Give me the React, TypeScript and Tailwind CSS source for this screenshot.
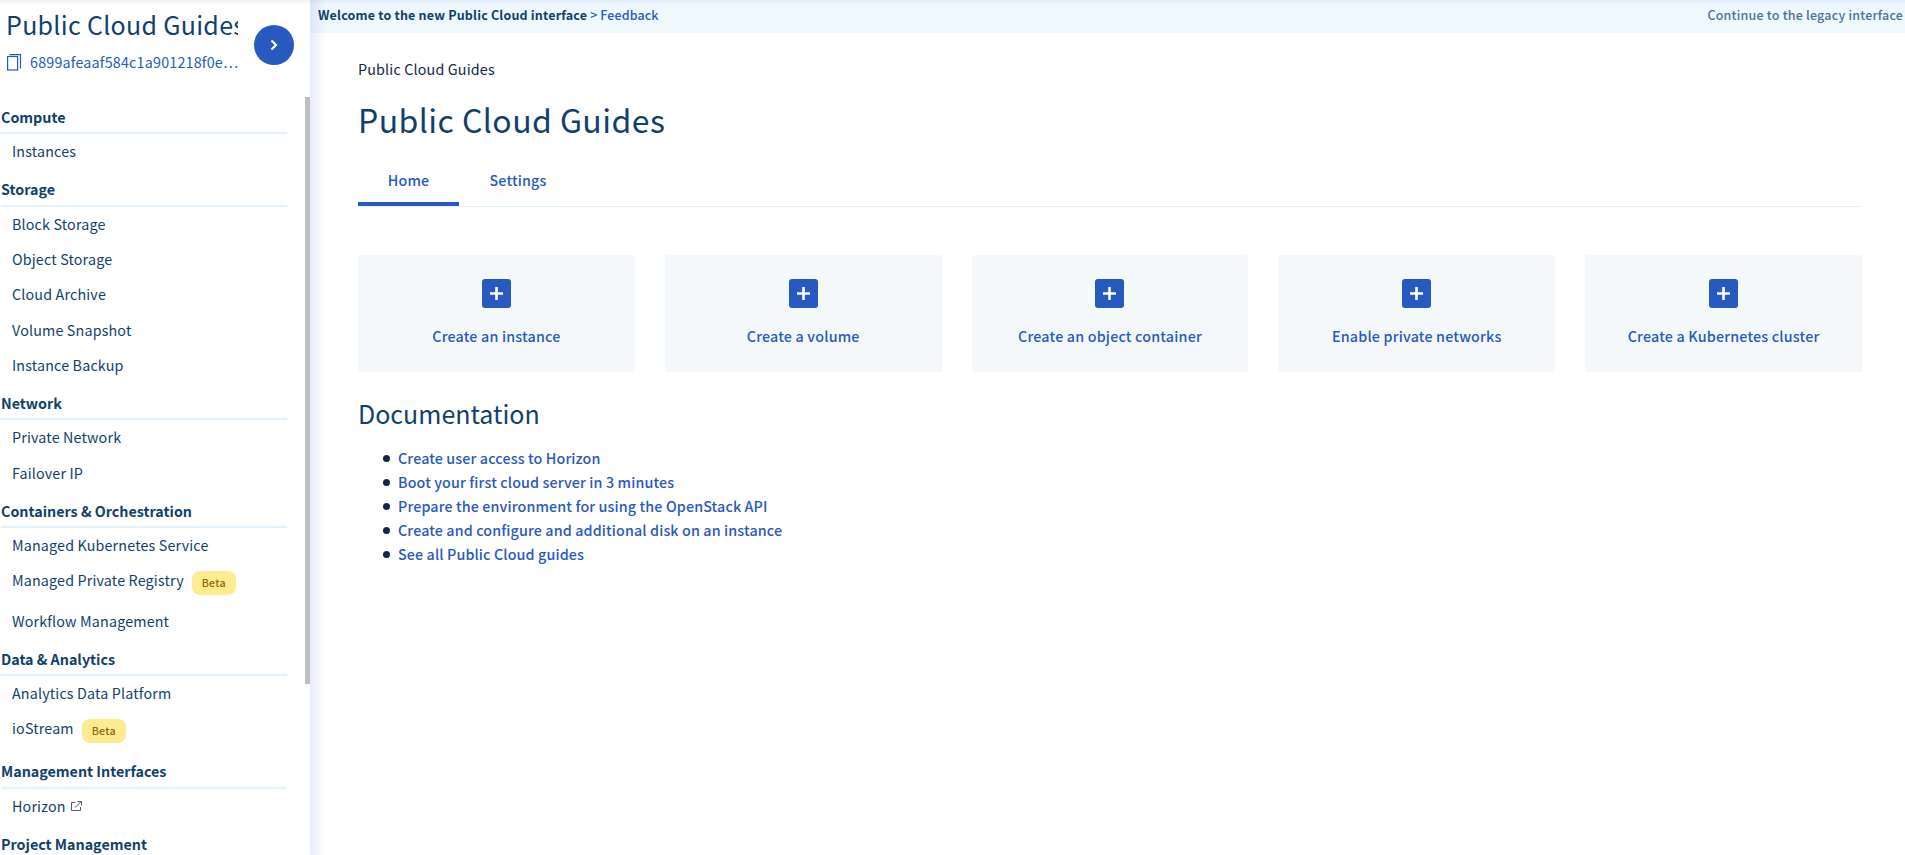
import React from "react";

type Item = { label: string; beta?: boolean; external?: boolean };
type Section = { title: string; items: Item[] };

const sections: Section[] = [
  { title: "Compute", items: [{ label: "Instances" }] },
  {
    title: "Storage",
    items: [
      { label: "Block Storage" },
      { label: "Object Storage" },
      { label: "Cloud Archive" },
      { label: "Volume Snapshot" },
      { label: "Instance Backup" },
    ],
  },
  { title: "Network", items: [{ label: "Private Network" }, { label: "Failover IP" }] },
  {
    title: "Containers & Orchestration",
    items: [
      { label: "Managed Kubernetes Service" },
      { label: "Managed Private Registry", beta: true },
      { label: "Workflow Management" },
    ],
  },
  {
    title: "Data & Analytics",
    items: [{ label: "Analytics Data Platform" }, { label: "ioStream", beta: true }],
  },
  { title: "Management Interfaces", items: [{ label: "Horizon", external: true }] },
  { title: "Project Management", items: [] },
];

const actions = [
  "Create an instance",
  "Create a volume",
  "Create an object container",
  "Enable private networks",
  "Create a Kubernetes cluster",
];

const guides = [
  "Create user access to Horizon",
  "Boot your first cloud server in 3 minutes",
  "Prepare the environment for using the OpenStack API",
  "Create and configure and additional disk on an instance",
  "See all Public Cloud guides",
];

function CopyIcon() {
  return (
    <svg width="15" height="17" viewBox="0 0 15 17" fill="none" stroke="#2859c0" strokeWidth="1.2" className="shrink-0">
      <rect x="0.6" y="2.5" width="10" height="13.5" />
      <path d="M2.5 0.6H13.5V14.5" />
    </svg>
  );
}

function ExternalIcon() {
  return (
    <svg width="11" height="11" viewBox="0 0 11 11" fill="none" stroke="#4a5a70" className="mt-[7px] ml-[5px] shrink-0">
      <path d="M4.5 1.5H0.5V9.5H9.5V6" />
      <path d="M6.5 0.5H10.5V4.5" />
      <path d="M4 6.5L10 0.8" />
    </svg>
  );
}

function Sidebar() {
  return (
    <aside className="flex h-full w-[310px] shrink-0 flex-col bg-white">
      <div className="flex h-[97px] shrink-0">
        <div className="w-[238px] overflow-hidden pt-[9px] pl-[6px]">
          <div className="h-[30px] text-[25px] leading-[30px] tracking-[0.3px] whitespace-nowrap text-[#113f6d]">
            Public Cloud Guides
          </div>
          <div className="mt-[11px] flex h-6 items-center pl-px text-[#2859c0]">
            <CopyIcon />
            <span className="ml-2 text-[14.3px] leading-6 tracking-[0.2px] whitespace-nowrap">
              6899afeaaf584c1a901218f0e…
            </span>
          </div>
        </div>
        <button className="mt-[25px] ml-4 flex size-10 items-center justify-center rounded-full bg-[#2859c0]">
          <svg width="8" height="12" viewBox="0 0 8 12" fill="none" stroke="#fff" strokeWidth="2.2">
            <path d="M1.5 1.5L6 6L1.5 10.5" />
          </svg>
        </button>
      </div>
      <div className="flex min-h-0 flex-1">
        <nav className="w-[305px] overflow-hidden pr-[18px] pl-px">
          {sections.map((section) => (
            <section key={section.title}>
              <h2 className="h-[37.2px] border-b-2 border-[#e1f2fc] pt-[7.9px] text-[14.3px] leading-6 font-bold tracking-[0px] text-[#113f6d]">
                {section.title}
              </h2>
              <ul>
                {section.items.map((item) => (
                  <li
                    key={item.label}
                    className={
                      item.beta
                        ? "flex h-[40.1px] pt-[5px] pl-[11px]"
                        : "flex h-[35.3px] pt-[5px] pl-[11px]"
                    }
                  >
                    <a className="text-[14.3px] leading-6 tracking-[0.16px] text-[#113f6d]">{item.label}</a>
                    {item.beta && (
                      <span className="mt-[2.6px] ml-2 h-6 rounded-lg bg-[#ffec8f] px-[10px] text-[10.7px] leading-6 font-medium tracking-[0.2px] text-[#916610]">
                        Beta
                      </span>
                    )}
                    {item.external && <ExternalIcon />}
                  </li>
                ))}
              </ul>
            </section>
          ))}
        </nav>
        <div className="h-[587px] w-[5px] bg-[#bfbfbf]" />
      </div>
    </aside>
  );
}

export default function App() {
  return (
    <div className="relative flex h-[855px] w-[1905px] overflow-hidden bg-white font-['Noto_Sans_CJK_SC','Open_Sans',sans-serif]">
      <Sidebar />
      <div className="relative flex min-w-0 flex-1 flex-col">
        <header className="flex h-[33px] shrink-0 justify-between bg-[#eff8ff] pt-[3px] pr-[2px] pl-2 text-[12.5px] leading-6 font-medium whitespace-nowrap">
          <div className="flex">
            <span className="font-bold tracking-[0.18px] text-[#113f6d]">
              Welcome to the new Public Cloud interface
            </span>
            <a className="ml-[3px] tracking-[0.1px] text-[#2859c0]">&gt; Feedback</a>
          </div>
          <a className="tracking-[0.2px] text-[#4d7199]">Continue to the legacy interface</a>
        </header>
        <main className="flex flex-col pr-[43px] pl-12">
          <div className="mt-6 text-[14.3px] leading-6 tracking-[0.17px] text-[#122844]">Public Cloud Guides</div>
          <h1 className="mt-4 h-11 text-[32px] leading-[44px] tracking-[0.44px] text-[#113f6d]">
            Public Cloud Guides
          </h1>
          <div className="mt-5 flex h-[46px] border-b border-[#dff5f9] text-[14.3px] leading-6 font-medium tracking-[0.16px] text-[#2859c0]">
            <a className="h-[45px] w-[101px] border-b-4 border-[#2859c0] pt-[7px] text-center">Home</a>
            <a className="w-[118px] pt-[7px] text-center">Settings</a>
          </div>
          <div className="mt-12 grid grid-cols-5 gap-[30px]">
            {actions.map((action) => (
              <a
                key={action}
                className="flex h-[117px] flex-col items-center rounded-[3px] bg-[#f4f8fb] pt-6 text-[14.3px] leading-6 font-medium tracking-[0.18px] text-[#2859c0]"
              >
                <span className="flex size-[29px] items-center justify-center rounded-[3px] bg-[#2859c0]">
                  <svg width="13" height="13" viewBox="0 0 13 13" stroke="#fff" strokeWidth="2.6">
                    <path d="M6.5 0V13M0 6.5H13" />
                  </svg>
                </span>
                <span className="mt-4">{action}</span>
              </a>
            ))}
          </div>
          <h2 className="mt-[23px] h-9 text-[25px] leading-9 tracking-[0px] text-[#113f6d]">Documentation</h2>
          <ul className="mt-[15px] text-[14.3px] leading-6 font-medium tracking-[0.12px] text-[#2859c0]">
            {guides.map((guide) => (
              <li key={guide} className="flex h-6 items-center pl-[25px]">
                <span className="size-[7px] rounded-full bg-[#122844]" />
                <a className="ml-2">{guide}</a>
              </li>
            ))}
          </ul>
        </main>
        <div className="pointer-events-none absolute inset-y-0 left-0 w-4 bg-linear-to-r from-[#2846b4]/10 to-transparent" />
      </div>
      <div className="pointer-events-none absolute inset-x-0 top-0 h-[5px] bg-linear-to-b from-[#28507a]/8 to-transparent" />
    </div>
  );
}
